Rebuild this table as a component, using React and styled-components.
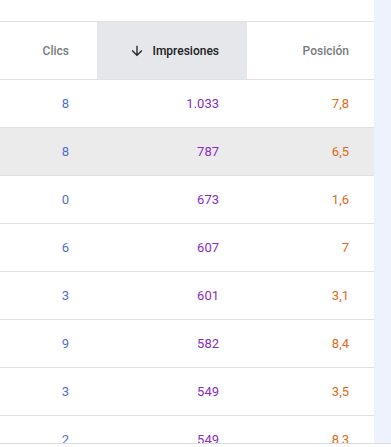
import React from "react";
import styled, { createGlobalStyle } from "styled-components";

const Global = createGlobalStyle`
  html, body { margin: 0; padding: 0; background: #fff; }
  body { font-family: Roboto, "Noto Sans", Arial, sans-serif; }
`;

const Frame = styled.div`
  display: flex;
  height: 443px;
  border-bottom: 1px solid #dadce0;
  overflow: hidden;
`;

const Panel = styled.div`
  width: 374px;
  flex: none;
  background: #fff;
  padding-top: 21px;
`;

const Strip = styled.div`
  flex: 1;
  background: #eef2fc;
`;

const Grid = styled.div`
  display: grid;
  grid-template-columns: 97px 150px 127px;
  border-top: 1px solid #e0e0e0;
`;

const HeadCell = styled.div`
  height: 57px;
  display: flex;
  align-items: center;
  justify-content: flex-end;
  gap: 8px;
  padding-right: ${(p) => p.$pr}px;
  font-size: 12px;
  font-weight: 500;
  color: ${(p) => (p.$active ? "#202124" : "#777a7e")};
  background: ${(p) => (p.$active ? "#e6e7eb" : "#fff")};
  border-bottom: 1px solid #e0e0e0;
`;

const Cell = styled.div`
  height: 47px;
  display: flex;
  align-items: center;
  justify-content: flex-end;
  padding-right: ${(p) => p.$pr}px;
  font-size: 13px;
  color: ${(p) => p.$color};
  background: ${(p) => (p.$hl ? "#ebebeb" : "#fff")};
  border-bottom: 1px solid #e0e0e0;
`;

const Arrow = () => (
  <svg width="16" height="16" viewBox="0 0 24 24" aria-hidden="true">
    <path d="M20 12l-1.41-1.41L13 16.17V4h-2v12.17l-5.58-5.59L4 12l8 8 8-8z" fill="#202124" />
  </svg>
);

const rows = [
  ["8", "1.033", "7,8"],
  ["8", "787", "6,5"],
  ["0", "673", "1,6"],
  ["6", "607", "7"],
  ["3", "601", "3,1"],
  ["9", "582", "8,4"],
  ["3", "549", "3,5"],
  ["2", "549", "8,3"],
];

const colors = ["#4f6fd6", "#8a2cc0", "#e06a1a"];
const pads = [28, 28, 25];

export default function App() {
  return (
    <>
      <Global />
      <Frame>
        <Panel>
          <Grid>
            <HeadCell $pr={pads[0]}>Clics</HeadCell>
            <HeadCell $pr={pads[1]} $active>
              <Arrow />
              Impresiones
            </HeadCell>
            <HeadCell $pr={pads[2]}>Posición</HeadCell>
            {rows.map((r, i) =>
              r.map((v, j) => (
                <Cell key={`${i}-${j}`} $pr={pads[j]} $color={colors[j]} $hl={i === 1}>
                  {v}
                </Cell>
              ))
            )}
          </Grid>
        </Panel>
        <Strip />
      </Frame>
    </>
  );
}
